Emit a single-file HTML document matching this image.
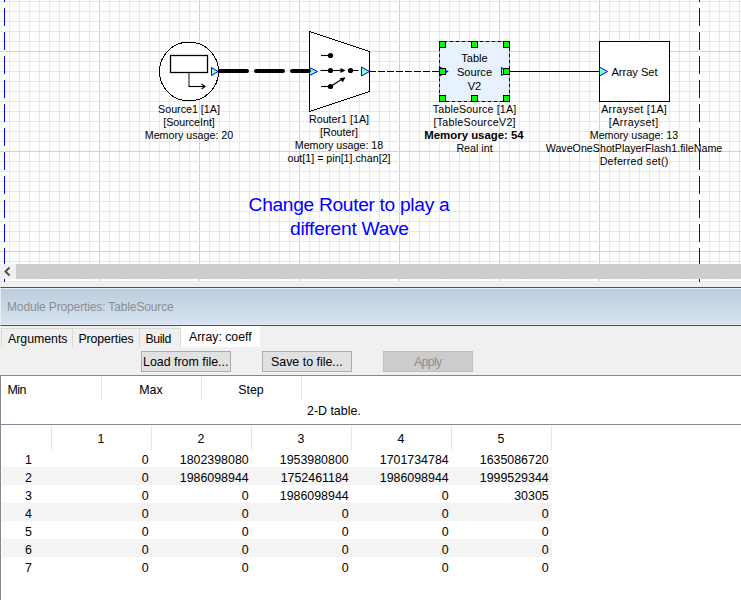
<!DOCTYPE html>
<html><head><meta charset="utf-8">
<style>
html,body{margin:0;padding:0;}
body{width:741px;height:600px;position:relative;overflow:hidden;background:#f0f0f0;font-family:"Liberation Sans",sans-serif;color:#000;}
.abs{position:absolute;}
#canvas{left:0;top:0;width:741px;height:282px;background-color:#fff;
 background-image:
  linear-gradient(to bottom, transparent 51px, #d2d2d2 51px, #d2d2d2 52px, transparent 52px),
  linear-gradient(to bottom, transparent 1px, #e8e8e8 1px, #e8e8e8 2px, transparent 2px),
  linear-gradient(to right, transparent 99px, #d2d2d2 99px, #d2d2d2 100px, transparent 100px),
  linear-gradient(to right, transparent 9px, #e8e8e8 9px, #e8e8e8 10px, transparent 10px);
 background-size:100% 100px, 100% 10px, 100px 100%, 10px 100%;
 background-position:0 0,0 0,0 0,0 0;
}
.vdash{position:absolute;top:0;width:1px;height:282px;
 background:repeating-linear-gradient(to bottom,#0000ff 0px,#0000ff 2px,#fff 2px,#fff 8px,#0000ff 8px,#0000ff 24px);}
#scroll{left:0;top:264px;width:741px;height:15px;background:#f0f0f0;}
#thumb{left:16px;top:264px;width:725px;height:15px;background:#cdcdcd;}
#title{left:0;top:287px;width:741px;height:39px;box-sizing:border-box;border-top:1px solid #505050;border-bottom:1px solid #505050;border-left:1px solid #e6ecf4;
 background:linear-gradient(to bottom,#e8eef8 0px,#e8eef8 1px,#bccdde 1px,#d7e3f0 36px,#e4ecf6 36px,#e4ecf6 37px);}
#title span{position:absolute;left:6px;top:12px;font-size:12px;letter-spacing:-0.13px;color:#8e8e8e;white-space:nowrap;}
.tab{position:absolute;top:328px;height:19px;box-sizing:border-box;border:1px solid #dadada;border-bottom:none;background:#f0f0f0;font-size:12.3px;line-height:14px;white-space:nowrap;}
.tab span{position:absolute;top:3px;}
.btn{position:absolute;top:351px;height:21px;box-sizing:border-box;border:1px solid #adadad;background:#e1e1e1;font-size:12.4px;white-space:nowrap;}
.btn span{position:absolute;top:3px;}
#panel{left:0;top:375px;width:741px;height:225px;background:#fff;box-sizing:border-box;border-top:1px solid #828790;border-left:1px solid #828790;}
.t{position:absolute;font-size:12.4px;white-space:nowrap;line-height:15px;}
.sep{position:absolute;width:1px;background:#e5e5e5;}
.grow{position:absolute;left:2px;width:550px;height:18px;background:#f4f4f4;}
.r{text-align:right;}
</style></head><body>
<div id="canvas" class="abs"></div>
<div class="vdash" style="left:4px"></div>
<div class="vdash" style="left:699px"></div>

<svg class="abs" style="left:0;top:0" width="741" height="282" viewBox="0 0 741 282">
 <!-- source circle -->
 <circle cx="189" cy="71.5" r="29.5" fill="#fff" stroke="#000" stroke-width="1" shape-rendering="crispEdges"/>
 <rect x="170.5" y="55.5" width="37" height="17" fill="#fff" stroke="#000" stroke-width="1.3"/>
 <line x1="189" y1="73" x2="189" y2="86.5" stroke="#555" stroke-width="1.4"/>
 <line x1="188.5" y1="86.5" x2="205" y2="86.5" stroke="#000" stroke-width="1.1"/>
 <path d="M201.5,84 L205,86.5 L201.5,89" fill="none" stroke="#000" stroke-width="1.1"/>
 <!-- thick dashed wire -->
 <polygon points="211.5,67.5 218,71.5 211.5,75.5" fill="#7fffd4" stroke="#0000ff" stroke-width="1"/>
 <!-- router -->
 <polygon points="309.5,31.5 369.5,51.5 369.5,91.5 309.5,111.5" fill="#fff" stroke="#000" stroke-width="1" shape-rendering="crispEdges"/>
 <polygon points="309.5,67.5 317.5,71.5 309.5,75.5" fill="#7fffd4" stroke="#0000ff" stroke-width="1"/>
 <line x1="220" y1="71" x2="309" y2="71" stroke="#000" stroke-width="4" stroke-dasharray="27,9" stroke-linecap="round"/>

 <polygon points="361.5,67 369.5,71.5 361.5,76" fill="#7fffd4" stroke="#0000ff" stroke-width="1"/>
 <g stroke="#000" stroke-width="1.1" fill="#000">
  <line x1="321" y1="55.5" x2="330.5" y2="55.5"/>
  <circle cx="330.5" cy="55.5" r="2.6" stroke="none"/>
  <line x1="320.5" y1="70.5" x2="342" y2="70.5"/>
  <circle cx="330.5" cy="70.5" r="2.6" stroke="none"/>
  <polygon points="340.5,68 345.5,70.5 340.5,73" stroke="none"/>
  <circle cx="350.5" cy="70.5" r="2.6" stroke="none"/>
  <line x1="350.5" y1="70.5" x2="358.5" y2="70.5"/>
  <line x1="321" y1="86.5" x2="330.5" y2="86.5"/>
  <circle cx="330.5" cy="86.5" r="2.6" stroke="none"/>
  <line x1="330.5" y1="86.5" x2="343" y2="78.5"/>
  <polygon points="345.5,77.3 339.5,78.3 342.8,82.3" stroke="none"/>
 </g>
 <!-- thin dashed wire -->
 <line x1="369" y1="71.5" x2="440" y2="71.5" stroke="#000" stroke-width="1" stroke-dasharray="7,2"/>
 <!-- table source box -->
 <rect x="439.5" y="41.5" width="70" height="60" fill="#e8f2fe" stroke="#00ff00" stroke-width="1" shape-rendering="crispEdges"/>
 <rect x="439.5" y="41.5" width="70" height="60" fill="none" stroke="#000" stroke-width="1" stroke-dasharray="3,3" stroke-dashoffset="1.5" shape-rendering="crispEdges"/>
 <polygon points="439.5,67 447.5,71.5 439.5,76" fill="none" stroke="#0000ff" stroke-width="1.2"/>
 <polygon points="501.5,67.5 509.5,71.5 501.5,75.5" fill="#7fffd4" stroke="#0000ff" stroke-width="1"/>
 <g fill="#00ff00" stroke="#000" stroke-width="1" shape-rendering="crispEdges">
  <rect x="439.5" y="41.5" width="6" height="6"/>
  <rect x="471.5" y="41.5" width="6" height="6"/>
  <rect x="503.5" y="41.5" width="6" height="6"/>
  <rect x="439.5" y="68.5" width="6" height="6"/>
  <rect x="503.5" y="68.5" width="6" height="6"/>
  <rect x="439.5" y="95.5" width="6" height="6"/>
  <rect x="471.5" y="95.5" width="6" height="6"/>
  <rect x="503.5" y="95.5" width="6" height="6"/>
 </g>
 <line x1="510" y1="71.5" x2="600" y2="71.5" stroke="#000" stroke-width="1"/>
 <!-- array set box -->
 <rect x="599.5" y="41.5" width="70" height="60" fill="#fff" stroke="#000" stroke-width="1" shape-rendering="crispEdges"/>
 <polygon points="599.5,67 607.5,71.5 599.5,76" fill="#7fffd4" stroke="#0000ff" stroke-width="1"/>

 <g font-family="Liberation Sans" font-size="11.1" text-anchor="middle" fill="#000">
  <text x="474.5" y="62">Table</text>
  <text x="474.5" y="76">Source</text>
  <text x="474.5" y="90">V2</text>
  <text x="634.5" y="76">Array Set</text>
 </g>
 <g font-family="Liberation Sans" font-size="10.7" text-anchor="middle" fill="#000">
  <text x="189" y="113">Source1 [1A]</text>
  <text x="189" y="126">[SourceInt]</text>
  <text x="189" y="139">Memory usage: 20</text>
  <text x="339" y="123">Router1 [1A]</text>
  <text x="339" y="136">[Router]</text>
  <text x="339" y="149">Memory usage: 18</text>
  <text x="339" y="162">out[1] = pin[1].chan[2]</text>
  <text x="474.5" y="113" textLength="83.3">TableSource [1A]</text>
  <text x="474.5" y="126" textLength="82.2">[TableSourceV2]</text>
  <text x="474" y="139" font-weight="bold" font-size="11.4">Memory usage: 54</text>
  <text x="474.5" y="152">Real int</text>
  <text x="634" y="113" textLength="65.7">Arrayset [1A]</text>
  <text x="633.5" y="126" textLength="49.4">[Arrayset]</text>
  <text x="634" y="139">Memory usage: 13</text>
  <text x="634" y="152">WaveOneShotPlayerFlash1.fileName</text>
  <text x="634" y="165" textLength="68.6">Deferred set()</text>
 </g>
 <g font-family="Liberation Sans" font-size="19.2" text-anchor="middle" fill="#0000ff">
  <text x="349.1" y="211" textLength="201" lengthAdjust="spacing">Change Router to play a</text>
  <text x="349.5" y="235" textLength="119" lengthAdjust="spacing">different Wave</text>
 </g>
</svg>

<div id="scroll" class="abs"></div>
<div id="thumb" class="abs"></div>
<svg class="abs" style="left:0;top:264px" width="16" height="15"><path d="M9.5,3.5 L5.5,7.5 L9.5,11.5" fill="none" stroke="#505050" stroke-width="2"/></svg>

<div id="title" class="abs"><span>Module Properties: TableSource</span></div>

<div class="tab" style="left:1px;width:72px"><span style="left:6px">Arguments</span></div>
<div class="tab" style="left:72px;width:68px"><span style="left:5.5px;letter-spacing:-0.1px">Properties</span></div>
<div class="tab" style="left:139px;width:42px"><span style="left:5.5px;letter-spacing:-0.4px">Build</span></div>
<div class="tab" style="left:181px;top:326px;width:79px;height:21px;background:#fff;border-color:#fff"><span style="left:7px;top:2.5px">Array: coeff</span></div>

<div class="btn" style="left:141px;width:90px"><span style="left:1px">Load from file...</span></div>
<div class="btn" style="left:262px;width:90px"><span style="left:8px">Save to file...</span></div>
<div class="btn" style="left:383px;width:90px;background:#cccccc;border-color:#bfbfbf;color:#8f8f8f"><span style="left:30px;letter-spacing:-0.7px">Apply</span></div>

<div id="panel" class="abs"></div>
<!-- header row -->
<div class="t" style="left:7.5px;top:383px;letter-spacing:-0.5px">Min</div>
<div class="t" style="left:101px;top:383px;width:100px;text-align:center">Max</div>
<div class="t" style="left:201px;top:383px;width:100px;text-align:center">Step</div>
<div class="sep" style="left:101px;top:377px;height:23px"></div>
<div class="sep" style="left:201px;top:377px;height:23px"></div>
<div class="sep" style="left:301px;top:377px;height:23px"></div>
<div class="t" style="left:307px;top:404px">2-D table.</div>
<div class="abs" style="left:0;top:424px;width:741px;height:1px;background:#828790"></div>

<!-- table -->
<div class="sep" style="left:51px;top:426px;height:24px"></div>
<div class="sep" style="left:151px;top:426px;height:24px"></div>
<div class="sep" style="left:251px;top:426px;height:24px"></div>
<div class="sep" style="left:351px;top:426px;height:24px"></div>
<div class="sep" style="left:451px;top:426px;height:24px"></div>
<div class="sep" style="left:551px;top:426px;height:24px"></div>
<div class="grow" style="top:467px"></div>
<div class="grow" style="top:503px"></div>
<div class="grow" style="top:539px"></div>
<div class="t" style="left:51px;top:432px;width:100px;text-align:center">1</div>
<div class="t" style="left:151px;top:432px;width:100px;text-align:center">2</div>
<div class="t" style="left:251px;top:432px;width:100px;text-align:center">3</div>
<div class="t" style="left:351px;top:432px;width:100px;text-align:center">4</div>
<div class="t" style="left:451px;top:432px;width:100px;text-align:center">5</div>
<div class="t" style="left:2.5px;top:453px;width:52px;text-align:center">1</div>
<div class="t r" style="left:48.7px;top:453px;width:100px">0</div>
<div class="t r" style="left:148.7px;top:453px;width:100px">1802398080</div>
<div class="t r" style="left:248.7px;top:453px;width:100px">1953980800</div>
<div class="t r" style="left:348.7px;top:453px;width:100px">1701734784</div>
<div class="t r" style="left:448.7px;top:453px;width:100px">1635086720</div>
<div class="t" style="left:2.5px;top:471px;width:52px;text-align:center">2</div>
<div class="t r" style="left:48.7px;top:471px;width:100px">0</div>
<div class="t r" style="left:148.7px;top:471px;width:100px">1986098944</div>
<div class="t r" style="left:248.7px;top:471px;width:100px">1752461184</div>
<div class="t r" style="left:348.7px;top:471px;width:100px">1986098944</div>
<div class="t r" style="left:448.7px;top:471px;width:100px">1999529344</div>
<div class="t" style="left:2.5px;top:489px;width:52px;text-align:center">3</div>
<div class="t r" style="left:48.7px;top:489px;width:100px">0</div>
<div class="t r" style="left:148.7px;top:489px;width:100px">0</div>
<div class="t r" style="left:248.7px;top:489px;width:100px">1986098944</div>
<div class="t r" style="left:348.7px;top:489px;width:100px">0</div>
<div class="t r" style="left:448.7px;top:489px;width:100px">30305</div>
<div class="t" style="left:2.5px;top:507px;width:52px;text-align:center">4</div>
<div class="t r" style="left:48.7px;top:507px;width:100px">0</div>
<div class="t r" style="left:148.7px;top:507px;width:100px">0</div>
<div class="t r" style="left:248.7px;top:507px;width:100px">0</div>
<div class="t r" style="left:348.7px;top:507px;width:100px">0</div>
<div class="t r" style="left:448.7px;top:507px;width:100px">0</div>
<div class="t" style="left:2.5px;top:525px;width:52px;text-align:center">5</div>
<div class="t r" style="left:48.7px;top:525px;width:100px">0</div>
<div class="t r" style="left:148.7px;top:525px;width:100px">0</div>
<div class="t r" style="left:248.7px;top:525px;width:100px">0</div>
<div class="t r" style="left:348.7px;top:525px;width:100px">0</div>
<div class="t r" style="left:448.7px;top:525px;width:100px">0</div>
<div class="t" style="left:2.5px;top:543px;width:52px;text-align:center">6</div>
<div class="t r" style="left:48.7px;top:543px;width:100px">0</div>
<div class="t r" style="left:148.7px;top:543px;width:100px">0</div>
<div class="t r" style="left:248.7px;top:543px;width:100px">0</div>
<div class="t r" style="left:348.7px;top:543px;width:100px">0</div>
<div class="t r" style="left:448.7px;top:543px;width:100px">0</div>
<div class="t" style="left:2.5px;top:561px;width:52px;text-align:center">7</div>
<div class="t r" style="left:48.7px;top:561px;width:100px">0</div>
<div class="t r" style="left:148.7px;top:561px;width:100px">0</div>
<div class="t r" style="left:248.7px;top:561px;width:100px">0</div>
<div class="t r" style="left:348.7px;top:561px;width:100px">0</div>
<div class="t r" style="left:448.7px;top:561px;width:100px">0</div>
</body></html>
